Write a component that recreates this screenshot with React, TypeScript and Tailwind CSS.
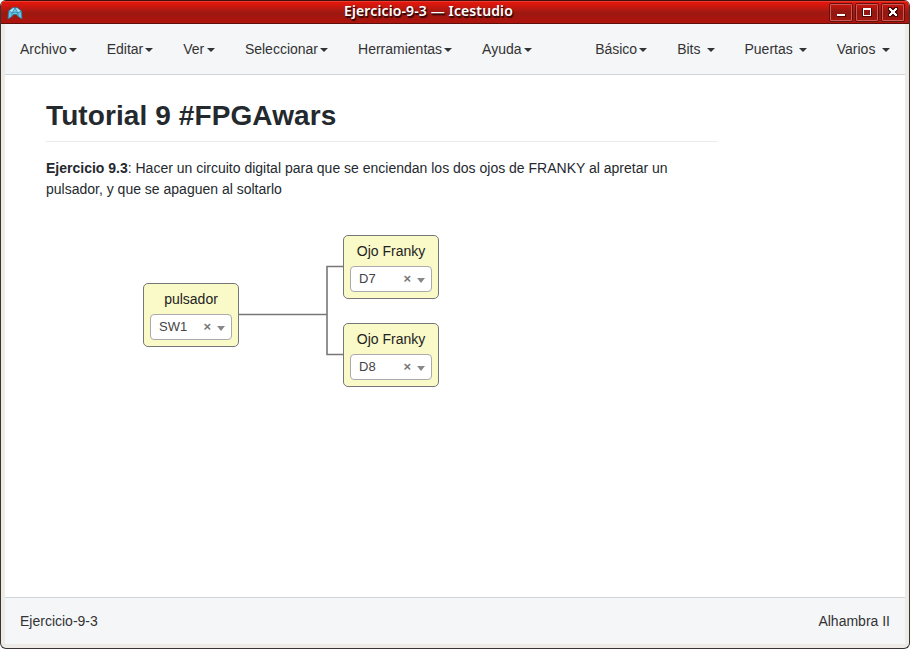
import type { ReactNode } from "react";

const leftMenus = ["Archivo", "Editar", "Ver", "Seleccionar", "Herramientas", "Ayuda"];
const rightMenus = ["Básico", "Bits", "Puertas", "Varios"];

function Menu({ label, spaced = false }: { label: string; spaced?: boolean }) {
  return (
    <div className="flex items-center px-[15px] text-[14px] leading-5 text-[#333333]">
      <span className={label === "Ver" ? "pr-[0.6px]" : label === "Varios" ? "pr-[0.6px]" : ""}>{label}</span>
      <span
        className={
          (spaced ? "ml-[6px]" : "ml-[2px]") +
          " mt-px border-x-4 border-t-4 border-x-transparent border-t-[#333333]"
        }
      />
    </div>
  );
}

function WindowButton({ children }: { children: ReactNode }) {
  return (
    <div className="h-[19px] w-6 rounded-[2px] border border-[#64100c]">
      <div className="h-full w-full rounded-[1px] border border-[#c95a54] bg-linear-to-b from-[#c5140c] via-[#8f1812] to-[#a3140e]">
        <svg viewBox="0 0 20 15" className="block h-[15px] w-5" shapeRendering="crispEdges">
          {children}
        </svg>
      </div>
    </div>
  );
}

function Block({ title, pin, place }: { title: string; pin: string; place: string }) {
  return (
    <div
      className={
        "absolute h-16 w-24 rounded-[5px] border border-[#777777] bg-[#fafac8] px-[6px] pt-[5px] " + place
      }
    >
      <div className="h-5 text-center text-[14px] leading-5 text-[#222222]">{title}</div>
      <div className="mt-[5px] flex h-[26px] items-center rounded-[4px] border border-[#aaaaaa] bg-white pl-2 text-[13px] text-[#444444]">
        <span className="w-[44.5px] leading-6">{pin}</span>
        <span className="w-[8px] text-[13px] leading-6 font-bold text-[#777777]">×</span>
        <span className="mt-[3px] ml-[5.5px] border-x-4 border-t-[5px] border-x-transparent border-t-[#888888]" />
      </div>
    </div>
  );
}

export default function App() {
  return (
    <div className="h-[649px] w-[910px] overflow-hidden bg-white font-['Liberation_Sans',Arial,sans-serif]">
      <div className="flex h-full flex-col overflow-hidden rounded-[6px] border-x border-b border-[#393432] bg-[#eeeae6]">
        <header className="flex h-6 shrink-0 items-start border-t border-b border-t-[#40100d] border-b-[#5b100d] bg-linear-to-b from-[#ef1509] via-[#9c1811] via-55% to-[#b0130c] pl-[6px] shadow-[inset_0_1px_0_#e83a31]">
          <svg viewBox="0 0 16 14" className="mt-[5px] h-[14px] w-4">
            <path d="M1 13 1.5 5 6 1.5H10L14.5 5 15 13 11 10.5 9.5 8.5H6.5L5 10.5Z" fill="#69c4e9" stroke="#28718e" strokeWidth=".8" />
            <path d="M1.5 5 5 7 8 2 11 7 14.5 5M5 7V10M11 7V10M5 7 8 6 11 7" fill="none" stroke="#347e9b" strokeWidth=".7" />
            <path d="M2.6 4.8 6 2.2 7 2.4 5 6zM10 2.2l3.4 2.6L11 6 9 2.4z" fill="#a6e2f6" />
          </svg>
          <h1 className="ml-[5px] flex-1 text-center font-['Noto_Sans',sans-serif] text-[14px] leading-5 font-semibold tracking-[0.12px] whitespace-nowrap text-white [text-shadow:1px_1px_1px_#380706,1px_2px_1px_#380706]">
            Ejercicio-9-3 — Icestudio
          </h1>
          <div className="mt-[2px] mr-1 flex gap-[2px]">
            <WindowButton>
              <path d="M6 9h9v3H6z" fill="#4c0906" />
              <path d="M6 9h8v2H6z" fill="white" />
            </WindowButton>
            <WindowButton>
              <path d="M5 3h10v9H5z" fill="#4c0906" />
              <path d="M6 3h8v8H6z" fill="white" />
              <path d="M7 5h6v5H7z" fill="#8f1812" />
            </WindowButton>
            <WindowButton>
              <path d="M5 2h4v1h2V2h4v4h-1v2h1v4h-4v-1H9v1H5V8h1V6H5z" fill="#4c0906" />
              <path d="M6 3h2v1h1v1h2V4h1V3h2v2h-1v1h-1v2h1v1h1v2h-2v-1h-1V9H9v1H8v1H6V9h1V8h1V6H7V5H6z" fill="white" />
            </WindowButton>
          </div>
        </header>
        <div className="mx-1 mb-1 flex min-h-0 flex-1 flex-col bg-white">
          <nav className="flex h-[51px] shrink-0 justify-between border-b border-[#d3d6d9] bg-[#f5f6f8]">
            <div className="flex">
              {leftMenus.map((label) => (
                <Menu key={label} label={label} />
              ))}
            </div>
            <div className="flex">
              {rightMenus.map((label, i) => (
                <Menu key={label} label={label} spaced={i > 0} />
              ))}
            </div>
          </nav>
          <main className="relative flex-1 pl-[41px] text-[#24292e]">
            <h2 className="h-[67px] w-[672px] border-b border-[#eaecef] pt-[23px] text-[28px] leading-[35px] font-bold tracking-[0.1px]">
              Tutorial 9 #FPGAwars
            </h2>
            <p className="mt-4 w-[672px] text-[14px] leading-[21px]">
              <strong>Ejercicio 9.3</strong>: Hacer un circuito digital para que se enciendan los dos ojos de
              FRANKY al apretar un pulsador, y que se apaguen al soltarlo
            </p>
            <svg
              className="absolute top-[185px] left-[233px]"
              width="106"
              height="100"
              viewBox="0 0 106 100"
              fill="none"
              stroke="#777777"
              strokeWidth="1.6"
            >
              <path d="M0 54.5H89V6.5H105M89 54.5V94.5H105" />
            </svg>
            <Block title="pulsador" pin="SW1" place="left-[138px] top-[208px]" />
            <Block title="Ojo Franky" pin="D7" place="left-[338px] top-[160px]" />
            <Block title="Ojo Franky" pin="D8" place="left-[338px] top-[248px]" />
          </main>
          <footer className="flex h-[47px] shrink-0 items-center justify-between border-t border-[#d3d6d9] bg-[#f5f6f8] px-[15px] text-[14px] leading-5 text-[#333333]">
            <span>Ejercicio-9-3</span>
            <span>Alhambra II</span>
          </footer>
        </div>
      </div>
    </div>
  );
}
